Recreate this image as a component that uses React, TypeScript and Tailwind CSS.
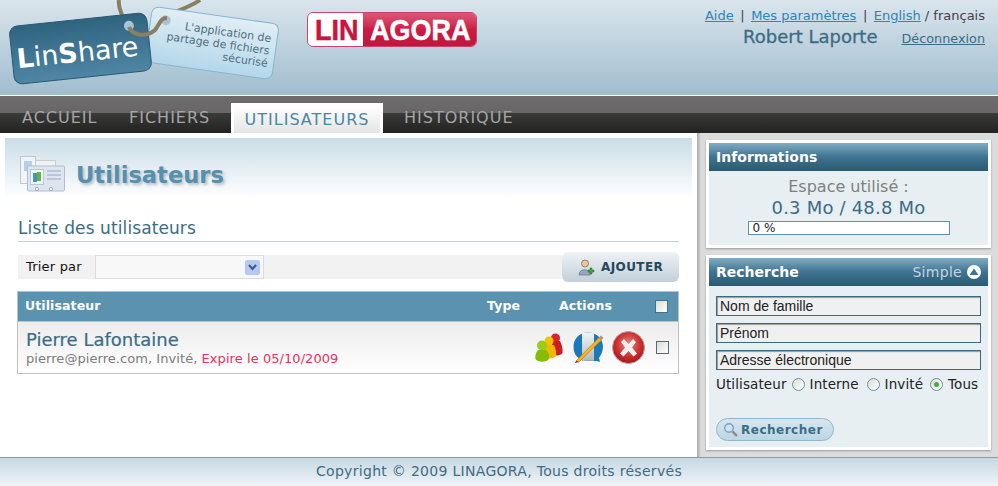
import React from "react";

const font = { fontFamily: '"DejaVu Sans", Verdana, sans-serif' };

const LinShareLogo = () => (
  <svg width="285" height="90" viewBox="0 0 285 90" className="shrink-0">
    <defs>
      <linearGradient id="tagDark" x1="0" y1="0" x2="0" y2="1">
        <stop offset="0" stopColor="#2f6480" />
        <stop offset="1" stopColor="#4e86a4" />
      </linearGradient>
      <linearGradient id="tagLight" x1="0" y1="0" x2="0" y2="1">
        <stop offset="0" stopColor="#e2eef4" />
        <stop offset="1" stopColor="#b4d7ea" />
      </linearGradient>
    </defs>
    <path d="M119 0 C118 6 120 10 122 15" fill="none" stroke="#8a7f62" strokeWidth="4" />
    <path d="M200 0 C192 6 180 10 170 14" fill="none" stroke="#8a7f62" strokeWidth="4" />
    <g transform="rotate(8 212 43)" fontFamily="DejaVu Sans" fontSize="11" fill="#4f6f82" textAnchor="end">
      <rect x="148" y="15" width="128" height="56" rx="7" fill="url(#tagLight)" stroke="#86b6cf" />
      <circle cx="163" cy="27" r="5" fill="#a9c3d2" />
      <text x="270" y="34">L'application de</text>
      <text x="270" y="46.5">partage de fichiers</text>
      <text x="270" y="59">sécurisé</text>
    </g>
    <g transform="rotate(-6 80.5 48.5)">
      <rect x="11.5" y="19.5" width="138" height="58" rx="8" fill="url(#tagDark)" stroke="#2a5a72" />
      <circle cx="131" cy="31" r="5" fill="#a9c3d2" />
      <text x="16" y="61.5" fontSize="27" fill="#fff" fontFamily="DejaVu Sans">
        <tspan fontWeight="bold">L</tspan>in<tspan fontWeight="bold">S</tspan>hare
      </text>
    </g>
    <path d="M129 27 C132 35 146 38 155 30 C160 24 160 18 167 18" fill="none" stroke="#8a7f62" strokeWidth="4" />
  </svg>
);

const LinagoraLogo = () => (
  <div className="flex h-[35px] w-[170px] mt-3 ml-[22px] shrink-0 rounded-[6px] border border-[#c5476a] overflow-hidden font-bold text-[30px] leading-[33px] whitespace-nowrap" style={{ fontFamily: '"Liberation Sans", sans-serif' }}>
    <div className="w-[55px] bg-white text-[#c9153f] pl-[7px]">
      <span className="inline-block origin-left scale-x-[0.9] [-webkit-text-stroke:0.5px_#c9153f]">LIN</span>
    </div>
    <div className="flex-1 bg-gradient-to-b from-[#dd5577] via-[#cc1a45] to-[#c2163f] text-white pl-[7px]">
      <span className="inline-block origin-left scale-x-[0.9] [-webkit-text-stroke:0.5px_#ffffff]">AGORA</span>
    </div>
  </div>
);

const NavTab = ({ label, width }: { label: string; width: string }) => (
  <div className={`h-[30px] mt-[7px] text-[#a5a5a5] leading-[30px] ${width}`}>{label}</div>
);

const PanelTitle = ({ children }: { children: React.ReactNode }) => (
  <div className="flex items-center justify-between h-[28px] px-[7px] text-[14px] font-semibold text-white bg-gradient-to-b from-[#7fadc5] via-[#3f7390] to-[#2a5a72]">
    {children}
  </div>
);

const Field = ({ label }: { label: string }) => (
  <div className="h-5 border border-[#3d6a80] bg-[#f0f0f0] pl-[3px] text-[14px] leading-[18px] text-[#222] shadow-[inset_1px_1px_1px_#999]" style={{ fontFamily: '"Liberation Sans", sans-serif' }}>
    {label}
  </div>
);

const Radio = ({ on }: { on?: boolean }) => (
  <span className="flex items-center justify-center w-[13px] h-[13px] rounded-full border border-[#6f8fa5] bg-gradient-to-br from-[#dcdcd4] to-white mx-[5px]">
    {on && <span className="w-[5px] h-[5px] rounded-full bg-[#3fae3f]" />}
  </span>
);

const Check = () => (
  <span className="block w-[13px] h-[13px] border border-[#44708f] bg-gradient-to-br from-[#dcdcd4] to-white" />
);

const GroupIcon = () => (
  <svg width="28" height="29" viewBox="0 0 28 29" className="shrink-0">
    <circle cx="20.5" cy="5" r="4.5" fill="#d8262c" />
    <path d="M16 8 L25 8 C27 12 28 16 27.5 20 C26 23 20 23 16 21Z" fill="#c81e24" />
    <circle cx="14" cy="8" r="4.5" fill="#f5c400" />
    <path d="M9 12 L19 12 C21 16 21.5 20 21 23 C19 26 12 26 9 24Z" fill="#f0b800" />
    <circle cx="7" cy="12.5" r="5" fill="#9bcc1c" />
    <path d="M3 17 L11 17 C14 20 14.5 23 14 26 C11 29.5 3 29.5 0.5 26 C0 23 0.5 20 3 17Z" fill="#84bd05" />
  </svg>
);

const EditIcon = () => (
  <svg width="32" height="31" viewBox="0 0 32 31" className="shrink-0">
    <defs>
      <linearGradient id="editBand" x1="0" y1="0" x2="0" y2="1">
        <stop offset="0" stopColor="#f2f5f7" />
        <stop offset="1" stopColor="#b4b8bb" />
      </linearGradient>
    </defs>
    <path d="M15 0.5 C6 0.5 0.5 7 0.5 15 C0.5 23 6 29 15 29 L24 29 L27 30 L26 26 C28 23 30 19 30 15 C30 7 24 0.5 15 0.5Z" fill="#1a78bb" />
    <path d="M9 1.5 C12 0.3 18 0.3 21 1.5 L21 28.8 L9 28.8Z" fill="url(#editBand)" />
    <path d="M3 29 L26 5.5 L28.5 8 L6 30Z" fill="#f5b21c" stroke="#b07a10" strokeWidth="0.6" />
    <path d="M26 5.5 L28 3.5 L30.5 6 L28.5 8Z" fill="#c98a7a" />
    <path d="M3 29 L2 31 L6 30Z" fill="#333" />
  </svg>
);

const DeleteIcon = () => (
  <svg width="33" height="33" viewBox="0 0 33 33" className="shrink-0">
    <defs>
      <radialGradient id="redBall" cx="0.5" cy="0.4" r="0.65">
        <stop offset="0" stopColor="#e08a8a" />
        <stop offset="0.6" stopColor="#cc2c2c" />
        <stop offset="1" stopColor="#981616" />
      </radialGradient>
    </defs>
    <circle cx="16.5" cy="16.5" r="16" fill="url(#redBall)" stroke="#b8a2a2" />
    <path d="M9 11 L12 8 L16.5 13 L21 8 L24 11 L20 16.5 L25 22.5 L21.5 25.5 L16.5 20 L11.5 25.5 L8 22.5 L13 16.5Z" fill="#f4f0f0" />
  </svg>
);

const AddUserIcon = () => (
  <svg width="17" height="17" viewBox="0 0 17 17">
    <circle cx="7" cy="4.5" r="3.5" fill="#e8c8a0" stroke="#7a6040" strokeWidth="0.7" />
    <path d="M1 16 C1 9 12 9 12 16Z" fill="#9aa6c2" stroke="#66708a" strokeWidth="0.7" />
    <path d="M12 9 H14 V11 H16 V13 H14 V15 H12 V13 H10 V11 H12Z" fill="#3fa83f" stroke="#1e6a1e" strokeWidth="0.5" />
  </svg>
);

const SheetsIcon = () => (
  <svg width="45" height="36" viewBox="0 0 45 36" className="shrink-0">
    <rect x="0.5" y="0.5" width="15" height="27" fill="#f2f4f7" stroke="#c0c6d0" />
    <rect x="15.5" y="4.5" width="20" height="12" fill="#eef1f5" stroke="#c8ced8" />
    <rect x="4" y="5" width="8" height="10" fill="#b7cfe6" />
    <rect x="7.5" y="10" width="37" height="25" rx="1" fill="#dde6f0" stroke="#b2bdcb" />
    <rect x="10.5" y="13.5" width="13" height="15" fill="#f4f8fb" stroke="#b4c8da" />
    <rect x="13" y="17" width="4" height="9" fill="#4a90c8" />
    <rect x="17" y="16" width="4" height="9" fill="#65b545" />
    <path d="M27 15 H41 M27 19 H41 M27 23 H41" stroke="#aebdd2" strokeWidth="1.3" />
    <circle cx="17" cy="33" r="1.6" fill="#fff" stroke="#a0a8b4" />
    <circle cx="31" cy="33" r="1.6" fill="#fff" stroke="#a0a8b4" />
  </svg>
);

const SearchIcon = () => (
  <svg width="15" height="15" viewBox="0 0 15 15">
    <circle cx="6" cy="6" r="4.3" fill="#cfe3f2" stroke="#7d9fc0" strokeWidth="1.4" />
    <path d="M9.5 9.5 L14 14" stroke="#8f8a7a" strokeWidth="2.4" />
  </svg>
);

export default function App() {
  return (
    <div className="flex flex-col h-[486px] w-[998px] overflow-hidden bg-[#dcdcdc]" style={font}>
      <header className="flex h-[95px] shrink-0 bg-gradient-to-b from-[#dae5ed] to-[#a0bdce]">
        <LinShareLogo />
        <LinagoraLogo />
        <div className="ml-auto pr-[13px] pt-[7px] text-right">
          <div className="text-[13px] leading-[17px] text-[#444]">
            <a className="underline text-[#2b86bb]">Aide</a>
            <span className="mx-[6.5px]">|</span>
            <a className="underline text-[#2b86bb]">Mes paramètres</a>
            <span className="mx-[6.5px]">|</span>
            <a className="underline text-[#2b86bb]">English</a> / français
          </div>
          <div className="flex items-center justify-end mt-[1px]">
            <span className="text-[18px] leading-[24px] font-medium text-[#3d6c85] [-webkit-text-stroke:0.3px_#3d6c85]">Robert Laporte</span>
            <a className="ml-6 mt-[3px] text-[12.8px] underline text-[#3d6c85]">Déconnexion</a>
          </div>
        </div>
      </header>
      <div className="h-px shrink-0 bg-white" />
      <nav className="flex h-[37px] pl-[22px] shrink-0 text-[16px] tracking-[1px] bg-[linear-gradient(#6e6c6c,#686666_45%,#3a3a3a_46%,#222220)]">
        <NavTab label="ACCUEIL" width="w-[107px]" />
        <NavTab label="FICHIERS" width="w-[102px]" />
        <div className="w-[152px] h-[30px] mt-[7px] border-[3px] border-b-0 border-white bg-gradient-to-b from-white to-[#e4e4e4] text-center text-[#4a86a6] leading-[27px]">
          UTILISATEURS
        </div>
        <NavTab label="HISTORIQUE" width="ml-[21px]" />
      </nav>
      <div className="flex flex-1 min-h-0">
        <main className="w-[697px] shrink-0 bg-white pl-[5px] pt-[5px] pr-[5px]">
          <div className="flex h-[60px] pl-[15px] pt-[18px] bg-gradient-to-b from-[#cadde7] to-white">
            <SheetsIcon />
            <h1 className="ml-[11px] text-[22.6px] leading-[38px] font-bold text-[#5690ae] [text-shadow:2px_2px_3px_#b5bcc2]">Utilisateurs</h1>
          </div>
          <div className="ml-[13px] mr-[13px]">
            <div className="mt-[19px] h-[25px] border-b border-[#bcd0de] text-[17px] tracking-[0.1px] leading-[22px] text-[#3d6c85]">Liste des utilisateurs</div>
            <div className="flex items-center mt-[10px] h-[30px]">
              <div className="flex flex-1 items-center h-6 bg-[#f2f2f2]">
                <span className="w-[77px] pl-2 text-[13px] tracking-[0.2px] text-[#111]">Trier par</span>
                <div className="flex items-center justify-end w-[169px] h-6 border border-[#dcdcdc] bg-[#f8f8f8] pr-[3px]">
                  <span className="flex items-center justify-center w-[15px] h-[15px] rounded-[2px] bg-[#b5c9f5]">
                    <svg width="9" height="7" viewBox="0 0 9 7"><path d="M1 1 L4.5 5 L8 1" fill="none" stroke="#44557a" strokeWidth="2" /></svg>
                  </span>
                </div>
              </div>
              <button className="flex items-center w-[117px] h-[30px] pl-4 rounded-[6px] bg-gradient-to-b from-[#eef2f5] to-[#c2d0d9] text-[12px] font-semibold tracking-[0.4px] text-[#24485c]">
                <AddUserIcon />
                <span className="ml-[6px]">AJOUTER</span>
              </button>
            </div>
            <div className="mt-[9px] -ml-px border border-[#c0c0c0]">
              <div className="flex items-center h-[29px] pl-[7px] bg-[#5a92b0] text-[12.5px] tracking-[0.1px] font-bold text-white">
                <span className="w-[462px]">Utilisateur</span>
                <span className="w-[72px]">Type</span>
                <span className="w-[96px]">Actions</span>
                <Check />
              </div>
              <div className="flex items-center h-[52px] border-t border-[#c0c0c0] pl-2 bg-gradient-to-b from-[#ececec] to-white">
                <div className="w-[509px]">
                  <div className="text-[18px] leading-[21px] font-medium text-[#3d6c85] [-webkit-text-stroke:0.2px_#3d6c85]">Pierre Lafontaine</div>
                  <div className="text-[13px] tracking-[0.06px] leading-4 mt-[1px] text-[#7d7d7d]">
                    pierre@pierre.com, Invité, <span className="text-[#e8325a]">Expire le 05/10/2009</span>
                  </div>
                </div>
                <div className="flex items-center w-[121px]">
                  <GroupIcon />
                  <div className="ml-[10px] flex items-center gap-[7px]">
                    <EditIcon />
                    <DeleteIcon />
                  </div>
                </div>
                <Check />
              </div>
            </div>
          </div>
        </main>
        <aside className="flex-1 pl-[9px] pr-[7px] pt-[7px] bg-[linear-gradient(90deg,#a8a8a8,#dcdcdc_4px)]">
          <section className="h-[108px] border-[3px] border-white bg-[#e7eff3] shadow-[0_1px_2px_#999]">
            <PanelTitle>Informations</PanelTitle>
            <div className="text-center text-[16px] leading-[21px] mt-[5px] text-[#808080]">Espace utilisé :</div>
            <div className="text-center text-[18px] tracking-[0.2px] leading-[21px] text-[#3d6c85]">0.3 Mo / 48.8 Mo</div>
            <div className="w-[202px] h-[14px] mx-auto mt-[3px] border border-[#5a92b0] bg-white pl-1 text-[12px] leading-[12px] text-[#222]">0 %</div>
          </section>
          <section className="h-[195px] mt-[7px] border-[3px] border-white bg-[#e7eff3] shadow-[0_1px_2px_#999]">
            <PanelTitle>
              <span>Recherche</span>
              <span className="flex items-center gap-[5px] font-normal tracking-[0.3px] text-[#c2d6e2]">
                Simple
                <span className="flex items-center justify-center w-[14px] h-[14px] rounded-full bg-white">
                  <svg width="10" height="8" viewBox="0 0 10 8"><path d="M5 0.5 L9.5 7 H0.5Z" fill="#3f7390" /></svg>
                </span>
              </span>
            </PanelTitle>
            <div className="px-[7px] pt-[10px]">
              <div className="flex flex-col gap-[7px]">
                <Field label="Nom de famille" />
                <Field label="Prénom" />
                <Field label="Adresse électronique" />
              </div>
              <div className="flex items-center mt-[5px] whitespace-nowrap text-[13.5px] tracking-[0.1px] leading-[18px] text-[#222]">
                Utilisateur<Radio />Interne<span className="w-[3px]" /><Radio />Invité<span className="w-[2px]" /><Radio on />Tous
              </div>
              <button className="flex items-center w-[118px] h-[23px] mt-[25px] pl-[6px] rounded-full border border-[#8fb6cc] bg-gradient-to-b from-[#d6e6ef] to-[#bcd6e4] text-[12px] font-bold tracking-[0.5px] text-[#3d6c85]">
                <SearchIcon />
                <span className="ml-[3px]">Rechercher</span>
              </button>
            </div>
          </section>
        </aside>
      </div>
      <footer className="h-[29px] shrink-0 border-t border-[#8a9aa5] bg-gradient-to-b from-[#c6d8e3] to-[#eff4f7] text-center text-[14px] tracking-[0.3px] leading-[26px] text-[#3d6c85]">
        Copyright © 2009 LINAGORA, Tous droits réservés
      </footer>
    </div>
  );
}
